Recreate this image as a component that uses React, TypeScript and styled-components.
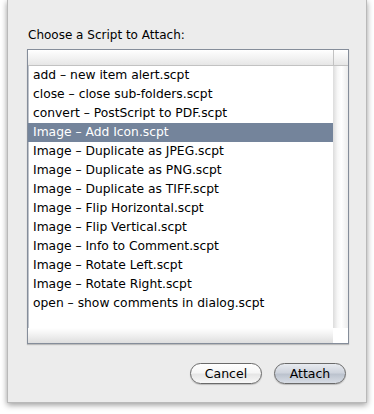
import React from 'react';
import styled, { createGlobalStyle } from 'styled-components';

const GlobalStyle = createGlobalStyle`
  html, body {
    margin: 0;
    padding: 0;
    background: #ffffff;
  }
  body {
    width: 374px;
    height: 414px;
    overflow: hidden;
    font-family: "DejaVu Sans", "Liberation Sans", sans-serif;
  }
`;

const scripts = [
  'add – new item alert.scpt',
  'close – close sub-folders.scpt',
  'convert – PostScript to PDF.scpt',
  'Image – Add Icon.scpt',
  'Image – Duplicate as JPEG.scpt',
  'Image – Duplicate as PNG.scpt',
  'Image – Duplicate as TIFF.scpt',
  'Image – Flip Horizontal.scpt',
  'Image – Flip Vertical.scpt',
  'Image – Info to Comment.scpt',
  'Image – Rotate Left.scpt',
  'Image – Rotate Right.scpt',
  'open – show comments in dialog.scpt',
];

const Sheet = styled.div`
  box-sizing: border-box;
  width: 360px;
  height: 403px;
  margin-left: 7px;
  padding: 27px 19px 0 19px;
  background: #ececec;
  border: 1px solid #b9b9b9;
  border-top: none;
  box-shadow: 0 2px 6px rgba(0, 0, 0, 0.4);
  display: flex;
  flex-direction: column;
`;

const Prompt = styled.div`
  font-size: 12px;
  line-height: 16px;
  color: #000;
  padding-left: 1px;
  margin-bottom: 6px;
`;

const ListFrame = styled.div`
  box-sizing: border-box;
  width: 322px;
  height: 295px;
  border: 1px solid #858d9a;
  box-shadow: 0 1px 1px rgba(0, 0, 0, 0.2), inset 0 0 0 1px #bfc4cc;
  background: #ffffff;
  display: grid;
  grid-template-columns: 1fr 15px;
  grid-template-rows: 16px 1fr 15px;
`;

const HeaderCell = styled.div<{ $last?: boolean }>`
  box-sizing: border-box;
  background: linear-gradient(#ffffff, #f3f3f3 50%, #e6e6e6);
  border-bottom: 1px solid #c2c2c2;
  border-left: ${p => (p.$last ? '1px solid #c2c2c2' : 'none')};
`;

const Rows = styled.ul`
  list-style: none;
  margin: 0;
  padding: 0;
  overflow: hidden;
`;

const Row = styled.li<{ $selected?: boolean }>`
  height: 19px;
  line-height: 19px;
  padding-left: 5px;
  font-size: 12.3px;
  white-space: nowrap;
  color: ${p => (p.$selected ? '#ffffff' : '#000000')};
  background: ${p => (p.$selected ? '#74849b' : 'transparent')};
`;

const VTrack = styled.div`
  background: linear-gradient(90deg, #dcdcdc, #f6f6f6 30%, #ffffff 55%, #ececec);
`;

const HTrack = styled.div`
  background: linear-gradient(#ffffff, #f3f3f3 40%, #dedede);
`;

const Corner = styled.div`
  background: #ffffff;
`;

const ButtonBar = styled.div`
  display: flex;
  justify-content: flex-end;
  gap: 12px;
  margin-top: 19px;
  padding-right: 1px;
`;

const PushButton = styled.button<{ $default?: boolean }>`
  box-sizing: border-box;
  width: 72px;
  height: 21px;
  padding: 0;
  border-radius: 11px;
  border: 1px solid #6a6a6a;
  font-family: "DejaVu Sans", "Liberation Sans", sans-serif;
  font-size: 12.5px;
  color: #000;
  box-shadow: 0 1px 1px rgba(0, 0, 0, 0.2);
  background: ${p =>
    p.$default
      ? 'linear-gradient(#e8ebf0, #cfd4dd 45%, #bcc3ce 55%, #d8dde5)'
      : 'linear-gradient(#ffffff, #f6f6f6 45%, #e6e6e6 55%, #f8f8f8)'};
`;

export default function App() {
  return (
    <>
      <GlobalStyle />
      <Sheet>
        <Prompt>Choose a Script to Attach:</Prompt>
        <ListFrame>
          <HeaderCell />
          <HeaderCell $last />
          <Rows>
            {scripts.map(name => (
              <Row key={name} $selected={name === 'Image – Add Icon.scpt'}>
                {name}
              </Row>
            ))}
          </Rows>
          <VTrack />
          <HTrack />
          <Corner />
        </ListFrame>
        <ButtonBar>
          <PushButton>Cancel</PushButton>
          <PushButton $default>Attach</PushButton>
        </ButtonBar>
      </Sheet>
    </>
  );
}
